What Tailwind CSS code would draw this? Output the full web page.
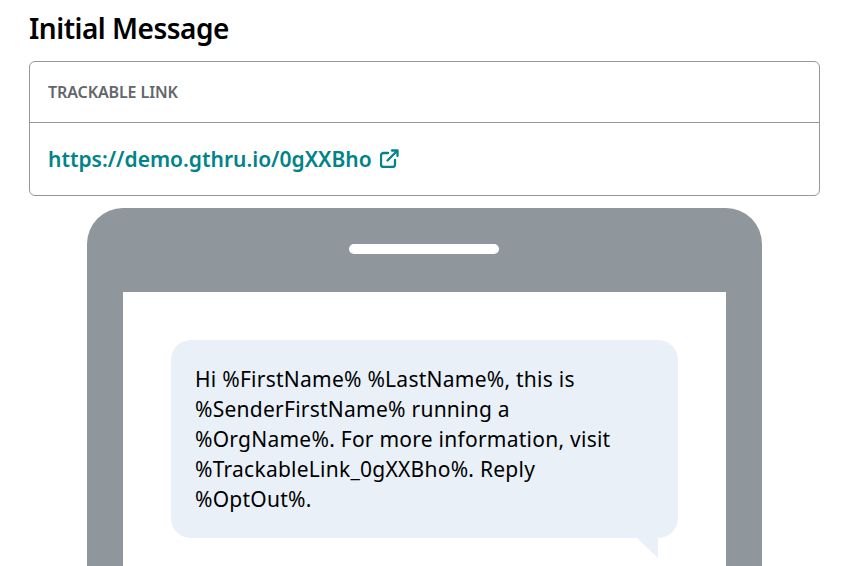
<!DOCTYPE html>
<html lang="en">

<head>
    <meta charset="UTF-8">
    <meta name="viewport" content="width=device-width, initial-scale=1.0">
    <script src="https://cdn.jsdelivr.net/npm/@tailwindcss/browser@4"></script>
    <title>Initial Message</title>
</head>

<body class="bg-white h-[566px] overflow-hidden font-['Noto_Sans',sans-serif]">
    <div class="w-[791px] ml-[29px] pt-[9px]">
        <h2 class="text-[28px] leading-[38px] font-semibold text-black tracking-[-0.5px] h-[52px]">Initial Message</h2>

        <!-- Trackable link card -->
        <div class="border border-[#94989c] rounded-[6px] h-[135px]">
            <div class="h-[61px] border-b border-[#94989c] px-[18px] pb-[1px] flex items-center">
                <span class="text-[16px] font-semibold text-[#62666a] tracking-[-0.1px]">TRACKABLE LINK</span>
            </div>
            <div class="h-[73px] px-[18px] flex items-center gap-[8px]">
                <a href="#" class="text-[21px] font-semibold text-[#00838a]">https://demo.gthru.io/0gXXBho</a>
                <svg class="w-[19px] h-[19px] text-[#00838a] -mt-[3px]" viewBox="0 0 19 19" fill="none" stroke="currentColor" stroke-width="2.300" stroke-linecap="round" stroke-linejoin="round">
                    <path d="M15 11v4.500a2.500 2.500 0 0 1-2.500 2.500h-9A2.500 2.500 0 0 1 1 15.500v-9A2.500 2.500 0 0 1 3.500 4H8" />
                    <path d="M12 1.500h5.500V7" />
                    <path d="M17 2 7.500 11.500" />
                </svg>
            </div>
        </div>

        <!-- Phone -->
        <div class="mt-[12px] ml-[58px] w-[675px] h-[358px] bg-[#90979c] rounded-t-[36px] px-[36px] pt-[84px]">
            <div class="h-full bg-white pt-[48px] px-[48px] relative">
                <div class="absolute -top-[48px] left-[226px] w-[150px] h-[10px] bg-white rounded-full"></div>
                <div class="relative w-[507px] h-[198px] bg-[#e9f0f8] rounded-[20px] px-[24px] pt-[24px] text-[21px] leading-[30px] text-black tracking-[0.25px]">
                    <p>Hi %FirstName% %LastName%, this is<br>%SenderFirstName% running a<br>%OrgName%. For more information, visit<br>%TrackableLink_0gXXBho%. Reply<br>%OptOut%.</p>
                    <svg class="absolute top-[198px] right-[20px] w-[21px] h-[20px]" viewBox="0 0 21 20"><path d="M0 0h21v20z" fill="#e9f0f8" /></svg>
                </div>
            </div>
        </div>
    </div>
</body>

</html>
